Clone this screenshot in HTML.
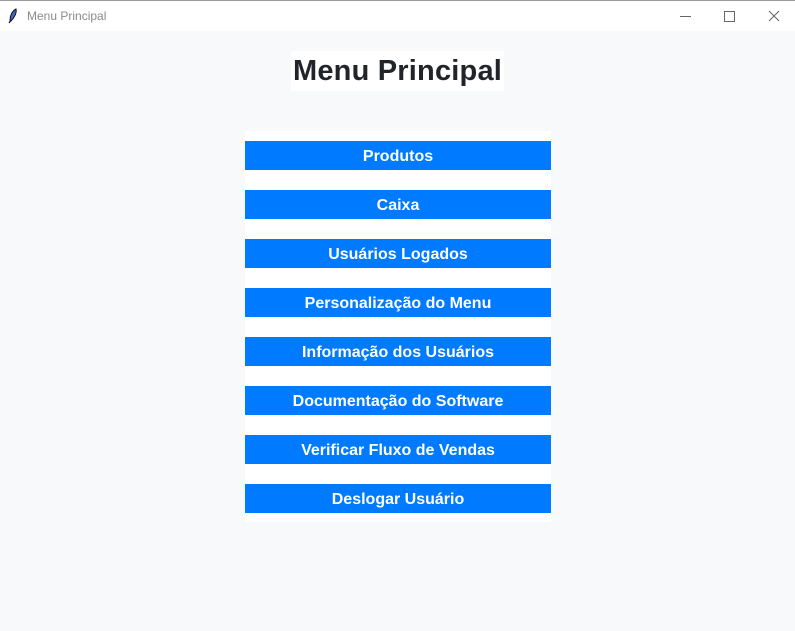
<!DOCTYPE html>
<html><head><meta charset="utf-8"><style>
*{margin:0;padding:0;box-sizing:border-box}
body{width:795px;height:631px;background:#f8f9fa;font-family:"Liberation Sans",Arial,sans-serif;position:relative;overflow:hidden}
.tb{position:absolute;left:0;top:0;width:795px;height:31px;background:#fff;border-top:1px solid #9a9a9a}
.tt{position:absolute;left:27px;top:8px;font-size:12px;color:#8a8a8a}
.title{position:absolute;left:291px;top:51px;width:213px;height:40px;background:#fff;font-weight:bold;font-size:29px;color:#212529;text-align:center;line-height:41px;letter-spacing:0.2px}
.panel{position:absolute;left:245px;top:131px;width:306px;height:391px;background:#fff}
.b{position:absolute;left:245px;width:306px;height:29px;background:#007bff;color:#fff;font-weight:bold;font-size:16px;text-align:center;line-height:31px}
</style></head><body>
<div class="tb">
<svg style="position:absolute;left:8px;top:7px" width="10" height="16" viewBox="0 0 10 16"><path d="M8 1 C4 3 2 8 2 12 L3 13 C6 10 9 5 8 1Z" fill="#3a6ec0" stroke="#111" stroke-width="1"/><path d="M3 12 L1 15" stroke="#111" stroke-width="1.2"/></svg>
<div class="tt">Menu Principal</div>
<svg style="position:absolute;left:680px;top:9px" width="110" height="14" viewBox="0 0 110 14"><path d="M0 6.5H11" stroke="#666" stroke-width="1"/><rect x="44.5" y="1.5" width="10" height="10" fill="none" stroke="#666"/><path d="M89 1L99 11M99 1L89 11" stroke="#666" stroke-width="1"/></svg>
</div>
<div class="title">Menu Principal</div>
<div class="panel"></div>
<div class="b" style="top:141px">Produtos</div>
<div class="b" style="top:190px">Caixa</div>
<div class="b" style="top:239px">Usuários Logados</div>
<div class="b" style="top:288px">Personalização do Menu</div>
<div class="b" style="top:337px">Informação dos Usuários</div>
<div class="b" style="top:386px">Documentação do Software</div>
<div class="b" style="top:435px">Verificar Fluxo de Vendas</div>
<div class="b" style="top:484px">Deslogar Usuário</div>
</body></html>
